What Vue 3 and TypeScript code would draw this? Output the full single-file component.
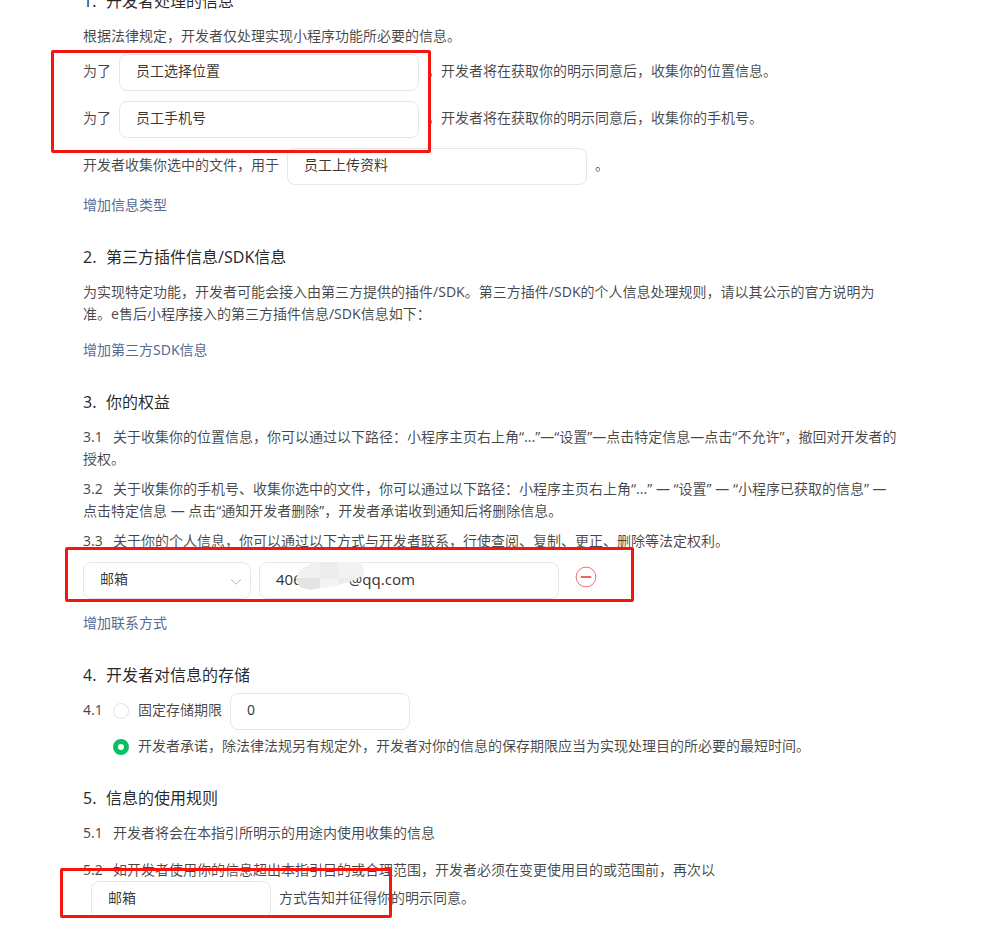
<script setup lang="ts">
const purposes = [
  { value: '员工选择位置', tail: '，开发者将在获取你的明示同意后，收集你的位置信息。' },
  { value: '员工手机号', tail: '，开发者将在获取你的明示同意后，收集你的手机号。' },
]
</script>

<template>
  <main class="page">
    <h2 class="title first"><span class="num">1.</span>开发者处理的信息</h2>
    <p class="line m-a">根据法律规定，开发者仅处理实现小程序功能所必要的信息。</p>
    <div class="purposes">
      <div v-for="p in purposes" :key="p.value" class="row">
        <span class="lead">为了</span>
        <div class="field w300">{{ p.value }}</div>
        <span class="tail">{{ p.tail }}</span>
      </div>
      <div class="row">
        <span class="lead">开发者收集你选中的文件，用于</span>
        <div class="field w300">员工上传资料</div>
        <span class="dot">。</span>
      </div>
    </div>
    <a class="link l1">增加信息类型</a>

    <h2 class="title t2"><span class="num">2.</span>第三方插件信息/SDK信息</h2>
    <p class="line m-a narrow">为实现特定功能，开发者可能会接入由第三方提供的插件/SDK。第三方插件/SDK的个人信息处理规则，请以其公示的官方说明为准。e售后小程序接入的第三方插件信息/SDK信息如下：</p>
    <a class="link l2">增加第三方SDK信息</a>

    <h2 class="title t2"><span class="num">3.</span>你的权益</h2>
    <p class="line m-a"><span class="no">3.1</span>关于收集你的位置信息，你可以通过以下路径：小程序主页右上角“...”—“设置”—点击特定信息—点击“不允许”，撤回对开发者的授权。</p>
    <p class="line m-b"><span class="no">3.2</span>关于收集你的手机号、收集你选中的文件，你可以通过以下路径：小程序主页右上角“...” — “设置” — “小程序已获取的信息” — 点击特定信息 — 点击“通知开发者删除”，开发者承诺收到通知后将删除信息。</p>
    <p class="line m-b"><span class="no">3.3</span>关于你的个人信息，你可以通过以下方式与开发者联系，行使查阅、复制、更正、删除等法定权利。</p>
    <div class="contact">
      <div class="field select">
        邮箱
        <svg class="chevron" viewBox="0 0 12 8" width="12" height="8" aria-hidden="true">
          <path d="M1 1.2 6 6.2 11 1.2" fill="none" stroke="#b5b5b5" stroke-width="1" />
        </svg>
      </div>
      <div class="field w300 mail">
        <span>406</span><span class="gap"></span><span>@qq.com</span>
        <span class="smudge"></span>
      </div>
      <svg class="minus" viewBox="0 0 22 22" width="22" height="22" aria-hidden="true">
        <circle cx="11" cy="11" r="9.9" fill="none" stroke="#f26d6d" stroke-width="1" />
        <path d="M5.8 11h10.4" stroke="#e8403f" stroke-width="1.6" />
      </svg>
    </div>
    <a class="link l3">增加联系方式</a>

    <h2 class="title t2"><span class="num">4.</span>开发者对信息的存储</h2>
    <div class="row store">
      <span class="no">4.1</span>
      <span class="radio"></span>
      <span class="lead">固定存储期限</span>
      <div class="field w180">0</div>
    </div>
    <div class="promise">
      <span class="radio on"></span>
      <span>开发者承诺，除法律法规另有规定外，开发者对你的信息的保存期限应当为实现处理目的所必要的最短时间。</span>
    </div>

    <h2 class="title t5"><span class="num">5.</span>信息的使用规则</h2>
    <p class="line m-a"><span class="no">5.1</span>开发者将会在本指引所明示的用途内使用收集的信息</p>
    <p class="line m-c"><span class="no">5.2</span>如开发者使用你的信息超出本指引目的或合理范围，开发者必须在变更使用目的或范围前，再次以</p>
    <div class="row notify">
      <div class="field w180">邮箱</div>
      <span class="tail">方式告知并征得你的明示同意。</span>
    </div>

    <div class="mark mark-a"></div>
    <div class="mark mark-b"></div>
    <div class="mark mark-c"></div>
  </main>
</template>

<style>
html, body { background: #fff; }
</style>

<style scoped>
.page {
  position: relative;
  box-sizing: border-box;
  width: 995px;
  height: 932px;
  overflow: hidden;
  padding: 0 92px 0 83px;
  font-family: "Noto Sans", "Noto Sans CJK SC", sans-serif;
  font-size: 14px;
  line-height: 22px;
  color: rgba(0, 0, 0, 0.72);
  background: #fff;
}
.title {
  margin: 0;
  font-size: 16px;
  font-weight: 400;
  line-height: 24px;
  color: rgba(0, 0, 0, 0.85);
}
.first { margin-top: -11px; }
.t2 { margin-top: 29px; }
.t5 { margin-top: 28px; }
.num { display: inline-block; width: 23px; }
.line { margin: 0; }
.m-a { margin-top: 12px; }
.m-b { margin-top: 8px; }
.m-c { margin-top: 15px; }
.narrow { max-width: 800px; }
.no { display: inline-block; width: 30px; }
.purposes { display: flex; flex-direction: column; gap: 10px; margin-top: 7px; }
.row { display: flex; align-items: center; }
.lead { margin-right: 8px; }
.field {
  box-sizing: border-box;
  height: 37px;
  display: flex;
  align-items: center;
  padding: 0 0 3px 16px;
  border: 1px solid #e7e7e7;
  border-radius: 8px;
  background: #fff;
  color: rgba(0, 0, 0, 0.8);
  flex: none;
}
.row > span { position: relative; top: -2px; }
.row > .radio { top: -1px; }
.w300 { width: 300px; }
.w180 { width: 180px; }
.tail { margin-left: 8px; }
.dot { margin-left: 8px; }
.link { display: block; color: #576b95; }
.l1 { margin-top: 9px; }
.l2 { margin-top: 14px; }
.l3 { margin-top: 13px; }
.contact { display: flex; align-items: center; margin-top: 10px; }
.select {
  position: relative;
  width: 168px;
  margin-right: 8px;
}
.chevron { position: absolute; right: 8px; top: 15px; }
.mail { position: relative; font-size: 15px; }
.gap { width: 47px; flex: none; }
.smudge {
  position: absolute;
  left: 36px;
  top: -1px;
  width: 68px;
  height: 28px;
  clip-path: polygon(25% 0, 95% 0, 100% 25%, 100% 45%, 85% 65%, 60% 85%, 20% 100%, 5% 90%, 0 60%, 5% 30%);
  background:
    linear-gradient(90deg, #e4e4e4 0 36%, #f3f3f3 36% 62%, #ececec 62% 100%) bottom / 100% 42% no-repeat,
    linear-gradient(90deg, #f1f1f1 0 36%, #ececec 36% 62%, #f2f2f2 62% 100%) top / 100% 58% no-repeat;
}
.minus { margin-left: 16px; margin-top: -8px; }
.store { margin-top: 6px; }
.radio {
  box-sizing: border-box;
  width: 16px;
  height: 16px;
  flex: none;
  border: 1px solid #e3e3e3;
  border-radius: 50%;
  margin-right: 9px;
  background: #fff;
}
.radio.on { border: 5px solid #07c160; }
.promise { display: flex; align-items: center; margin: 6px 0 0 30px; }
.promise > span:last-child { position: relative; top: -1px; }
.notify { margin-left: 8px; }
.mark {
  position: absolute;
  box-sizing: border-box;
  border: 3px solid #f5160f;
  border-radius: 2px;
}
.mark-a { left: 51px; top: 50px; width: 380px; height: 103px; }
.mark-b { left: 65px; top: 547px; width: 569px; height: 55px; }
.mark-c { left: 60px; top: 868px; width: 332px; height: 50px; }
</style>
